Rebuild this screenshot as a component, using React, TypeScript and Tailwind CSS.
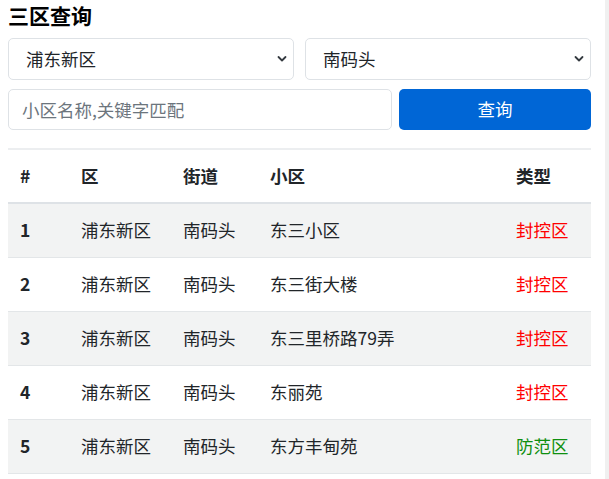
import React from 'react'

const rows = [
  { id: 1, district: '浦东新区', street: '南码头', name: '东三小区', kind: '封控区' },
  { id: 2, district: '浦东新区', street: '南码头', name: '东三街大楼', kind: '封控区' },
  { id: 3, district: '浦东新区', street: '南码头', name: '东三里桥路79弄', kind: '封控区' },
  { id: 4, district: '浦东新区', street: '南码头', name: '东丽苑', kind: '封控区' },
  { id: 5, district: '浦东新区', street: '南码头', name: '东方丰甸苑', kind: '防范区' },
]

function Chevron() {
  return (
    <svg width="12" height="8" viewBox="0 0 12 8" className="pointer-events-none absolute right-[6px] top-1/2 -translate-y-1/2">
      <path d="M2.5 2l3.5 3.5 3.5-3.5" fill="none" stroke="#343a40" strokeWidth="1.8" strokeLinecap="round" strokeLinejoin="round" />
    </svg>
  )
}

function Select({ value, options }: { value: string; options: string[] }) {
  return (
    <div className="relative flex-1">
      <select
        defaultValue={value}
        className="h-[42px] w-full appearance-none rounded-[5px] border border-[#dee2e6] bg-white pl-[17px] pr-8 text-[17.5px] text-[#212529] outline-none"
      >
        {options.map((o) => (
          <option key={o}>{o}</option>
        ))}
      </select>
      <Chevron />
    </div>
  )
}

export default function App() {
  return (
    <div className="flex min-h-screen bg-white font-['Noto_Sans_CJK_SC','Noto_Sans',sans-serif] text-[#212529]">
      <div className="flex-1 pl-2 pr-[14px]">
        <h2 className="mt-[3px] text-[21px] font-bold leading-[24px] text-black">三区查询</h2>

        <div className="mt-[11px] flex gap-[11px]">
          <Select value="浦东新区" options={['浦东新区', '黄浦区', '徐汇区']} />
          <Select value="南码头" options={['南码头', '陆家嘴', '塘桥']} />
        </div>

        <div className="mt-[9px] flex gap-[7px]">
          <input
            placeholder="小区名称,关键字匹配"
            className="h-[41px] w-[384px] rounded-[5px] border border-[#dee2e6] px-[13px] text-[17.5px] outline-none placeholder:text-[#6c757d]"
          />
          <button className="h-[41px] flex-1 rounded-[5px] bg-[#0066d6] text-[17.5px] text-white">查询</button>
        </div>

        <table className="mt-[18px] w-full table-fixed border-collapse border-t-2 border-[#eceef0] text-[17.5px]">
          <colgroup>
            <col className="w-[61px]" />
            <col className="w-[102px]" />
            <col className="w-[87px]" />
            <col />
            <col className="w-[87px]" />
          </colgroup>
          <thead>
            <tr className="h-[54px] border-b-2 border-[#dee2e6] text-left font-bold">
              <th className="pl-[12px]">#</th>
              <th className="pl-[12px]">区</th>
              <th className="pl-[12px]">街道</th>
              <th className="pl-[12px]">小区</th>
              <th className="pl-[12px]">类型</th>
            </tr>
          </thead>
          <tbody>
            {rows.map((r) => (
              <tr key={r.id} className={r.id % 2 === 1 ? 'h-[54px] border-b border-[#e3e6e8] bg-[#f2f3f3]' : 'h-[54px] border-b border-[#e3e6e8]'}>
                <td className="pl-[12px] font-bold">{r.id}</td>
                <td className="pl-[12px]">{r.district}</td>
                <td className="pl-[12px]">{r.street}</td>
                <td className="pl-[12px]">{r.name}</td>
                <td className={r.kind === '防范区' ? 'pl-[12px] text-[#0f8f0f]' : 'pl-[12px] text-[#ff0000]'}>{r.kind}</td>
              </tr>
            ))}
          </tbody>
        </table>
      </div>
      <div className="w-[4px] bg-[#f0f0f0]" />
    </div>
  )
}
